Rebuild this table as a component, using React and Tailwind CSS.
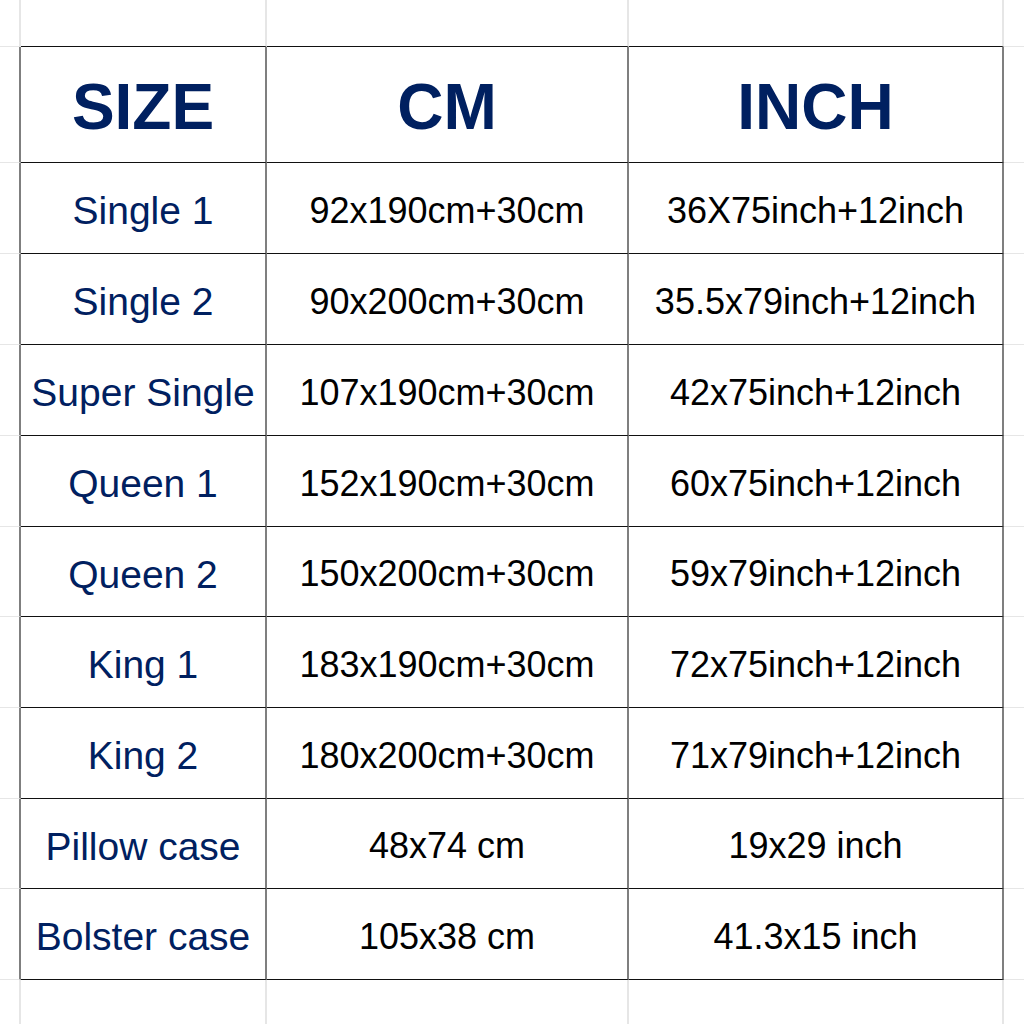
import React from "react";

const rows = [
  ["Single 1", "92x190cm+30cm", "36X75inch+12inch"],
  ["Single 2", "90x200cm+30cm", "35.5x79inch+12inch"],
  ["Super Single", "107x190cm+30cm", "42x75inch+12inch"],
  ["Queen 1", "152x190cm+30cm", "60x75inch+12inch"],
  ["Queen 2", "150x200cm+30cm", "59x79inch+12inch"],
  ["King 1", "183x190cm+30cm", "72x75inch+12inch"],
  ["King 2", "180x200cm+30cm", "71x79inch+12inch"],
  ["Pillow case", "48x74 cm", "19x29 inch"],
  ["Bolster case", "105x38 cm", "41.3x15 inch"],
];

// 12 grid rows: 0 top strip, 1 header, 2..10 data, 11 bottom strip
// 5 grid cols: 0 left strip, 1..3 table, 4 right strip
function cellBorder(r, c) {
  const tableRow = r >= 1 && r <= 10;
  const tableCol = c >= 1 && c <= 3;
  let cls = "";
  if (c < 4) {
    cls += tableRow ? " border-r-2 border-r-[#7f7f7f]" : " border-r-2 border-r-[#e6e6e6]";
  }
  if (r < 11) {
    const tableLine = tableCol && r >= 0 && r <= 10;
    cls += tableLine ? " border-b border-b-[#111111]" : " border-b border-b-[#e6e6e6]";
  }
  return cls;
}

export default function App() {
  const cells = [];
  for (let r = 0; r < 12; r++) {
    for (let c = 0; c < 5; c++) {
      let content = null;
      let pad = "";
      if (r === 1 && c >= 1 && c <= 3) {
        pad = " pt-[4px]";
        content = (
          <span className="text-[64px] font-bold text-[#002060] leading-none">
            {["SIZE", "CM", "INCH"][c - 1]}
          </span>
        );
      } else if (r >= 2 && r <= 10 && c >= 1 && c <= 3) {
        const val = rows[r - 2][c - 1];
        pad = " pt-[5px]";
        content =
          c === 1 ? (
            <span className="text-[39px] text-[#002060] leading-none whitespace-nowrap">{val}</span>
          ) : (
            <span className="text-[36px] text-black leading-none whitespace-nowrap">{val}</span>
          );
      }
      cells.push(
        <div
          key={`${r}-${c}`}
          className={"flex items-center justify-center overflow-visible" + pad + cellBorder(r, c)}
        >
          {content}
        </div>
      );
    }
  }
  return (
    <div
      className="w-[1024px] h-[1024px] bg-white overflow-hidden grid grid-cols-[21px_246px_362px_375px_1fr] grid-rows-[47px_116px_91px_91px_91px_91px_90px_91px_91px_90px_91px_1fr]"
      style={{ fontFamily: '"Liberation Sans", Arial, sans-serif' }}
    >
      {cells}
    </div>
  );
}
